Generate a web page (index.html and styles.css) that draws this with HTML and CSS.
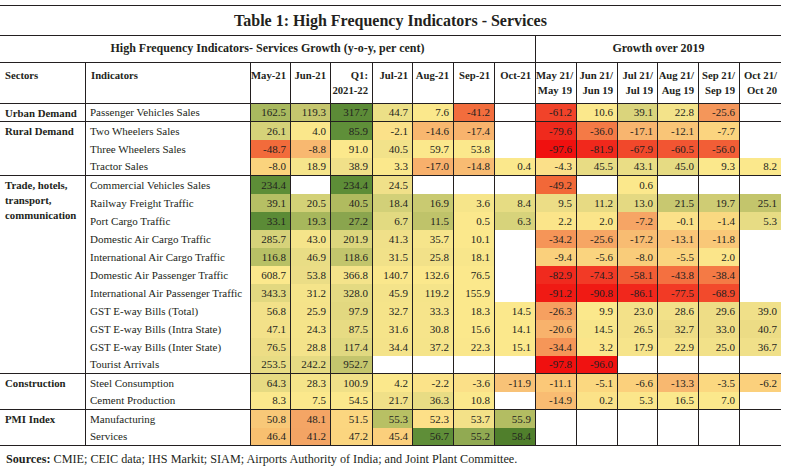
FILE: index.html
```html
<!DOCTYPE html>
<html lang="en">
<head>
<meta charset="utf-8">
<title>Table 1: High Frequency Indicators - Services</title>
<link rel="stylesheet" href="styles.css">
</head>
<body>
<div class="page">
<table class="hf">
<colgroup>
<col class="w86"><col class="w165"><col class="w40"><col class="w40"><col class="w42"><col class="w40"><col class="w41"><col class="w41"><col class="w41"><col class="w41"><col class="w41"><col class="w40"><col class="w41"><col class="w41"><col class="w41">
</colgroup>
<thead>
<tr class="r-title"><th colspan="15">Table 1: High Frequency Indicators - Services</th></tr>
<tr class="r-sub"><th colspan="9" class="sub-left">High Frequency Indicators- Services Growth (y-o-y, per cent)</th><th colspan="6">Growth over 2019</th></tr>
<tr class="r-head">
<th class="al">Sectors</th><th class="al">Indicators</th>
<th>May-21</th><th>Jun-21</th><th>Q1:<br>2021-22</th><th>Jul-21</th><th>Aug-21</th><th>Sep-21</th><th>Oct-21</th>
<th>May 21/<br>May 19</th><th>Jun 21/<br>Jun 19</th><th>Jul 21/<br>Jul 19</th><th>Aug 21/<br>Aug 19</th><th>Sep 21/<br>Sep 19</th><th>Oct 21/<br>Oct 20</th>
</tr>
</thead>
<tbody>
<tr><td class="sec" rowspan="1">Urban Demand</td><td class="ind">Passenger Vehicles Sales</td>
<td style="background:#a9b95f">162.5</td><td style="background:#c5c66e">119.3</td><td style="background:#5c8b37">317.7</td><td style="background:#ece087">44.7</td><td style="background:#fbe88c">7.6</td><td style="background:#f26d3d">-41.2</td><td></td>
<td style="background:#f1432a">-61.2</td><td style="background:#fbe88c">10.6</td><td style="background:#dad47c">39.1</td><td style="background:#f3e38a">22.8</td><td style="background:#f4965a">-25.6</td><td></td></tr>
</tbody>
<tbody>
<tr><td class="sec" rowspan="3">Rural Demand</td><td class="ind">Two Wheelers Sales</td>
<td style="background:#d5d279">26.1</td><td style="background:#fae78b">4.0</td><td style="background:#5f8f39">85.9</td><td style="background:#fbe189">-2.1</td><td style="background:#f8b76f">-14.6</td><td style="background:#f8b36d">-17.4</td><td></td>
<td style="background:#ef2a1d">-79.6</td><td style="background:#f47a46">-36.0</td><td style="background:#f8b56f">-17.1</td><td style="background:#f9c577">-12.1</td><td style="background:#fbd47f">-7.7</td><td></td></tr>
<tr><td class="ind">Three Wheelers Sales</td>
<td style="background:#f26b3b">-48.7</td><td style="background:#f8b870">-8.8</td><td style="background:#fbe88c">91.0</td><td style="background:#f2e28a">40.5</td><td style="background:#fbe88c">59.7</td><td style="background:#fbe88c">53.8</td><td></td>
<td style="background:#f0100f">-97.6</td><td style="background:#f1281c">-81.9</td><td style="background:#f1482b">-67.9</td><td style="background:#f25532">-60.5</td><td style="background:#f25e36">-56.0</td><td></td></tr>
<tr><td class="ind">Tractor Sales</td>
<td style="background:#fad37d">-8.0</td><td style="background:#f6e58b">18.9</td><td style="background:#f0e089">38.9</td><td style="background:#fbe88c">3.3</td><td style="background:#f7b06c">-17.0</td><td style="background:#f8bb72">-14.8</td><td style="background:#fbe88c">0.4</td>
<td style="background:#fbe089">-4.3</td><td style="background:#e8dc84">45.5</td><td style="background:#eadd85">43.1</td><td style="background:#e6db83">45.0</td><td style="background:#fbe88c">9.3</td><td style="background:#fbe88c">8.2</td></tr>
</tbody>
<tbody>
<tr><td class="sec" rowspan="11">Trade, hotels, transport, communication</td><td class="ind">Commercial Vehicles Sales</td>
<td style="background:#5d8d37">234.4</td><td></td><td style="background:#5d8d37">234.4</td><td style="background:#f0e089">24.5</td><td></td><td></td><td></td>
<td style="background:#f26838">-49.2</td><td></td><td style="background:#fbe88c">0.6</td><td></td><td></td><td></td></tr>
<tr><td class="ind">Railway Freight Traffic</td>
<td style="background:#b6bf64">39.1</td><td style="background:#d3d177">20.5</td><td style="background:#b0bb5f">40.5</td><td style="background:#d2d078">18.4</td><td style="background:#c9ca71">16.9</td><td style="background:#f6e58a">3.6</td><td style="background:#e6dc83">8.4</td>
<td style="background:#ecdd86">9.5</td><td style="background:#e7da83">11.2</td><td style="background:#e4d982">13.0</td><td style="background:#c8c870">21.5</td><td style="background:#cfcc74">19.7</td><td style="background:#c3c56c">25.1</td></tr>
<tr><td class="ind">Port Cargo Traffic</td>
<td style="background:#5b8b36">33.1</td><td style="background:#a7b75c">19.3</td><td style="background:#8aa54e">27.2</td><td style="background:#e2da81">6.7</td><td style="background:#bfc36a">11.5</td><td style="background:#fbe88c">0.5</td><td style="background:#d7d37b">6.3</td>
<td style="background:#fbe58a">2.2</td><td style="background:#fbe58a">2.0</td><td style="background:#f6a565">-7.2</td><td style="background:#fbe189">-0.1</td><td style="background:#fad981">-1.4</td><td style="background:#e7dc84">5.3</td></tr>
<tr><td class="ind">Domestic Air Cargo Traffic</td>
<td style="background:#d6d27a">285.7</td><td style="background:#f5e48a">43.0</td><td style="background:#dcd67d">201.9</td><td style="background:#f0e089">41.3</td><td style="background:#f6e58b">35.7</td><td style="background:#fbe88c">10.1</td><td></td>
<td style="background:#f59558">-34.2</td><td style="background:#f6a664">-25.6</td><td style="background:#f8bc72">-17.2</td><td style="background:#f9c477">-13.1</td><td style="background:#f9c878">-11.8</td><td></td></tr>
<tr><td class="ind">International Air Cargo Traffic</td>
<td style="background:#b8c065">116.8</td><td style="background:#e9dd85">46.9</td><td style="background:#c2c56c">118.6</td><td style="background:#f1e189">31.5</td><td style="background:#f2e189">25.8</td><td style="background:#f8e68b">18.1</td><td></td>
<td style="background:#fad07c">-9.4</td><td style="background:#fad47f">-5.6</td><td style="background:#f9cc7a">-8.0</td><td style="background:#fad47e">-5.5</td><td style="background:#fbe58a">2.0</td><td></td></tr>
<tr><td class="ind">Domestic Air Passenger Traffic</td>
<td style="background:#fbe88c">608.7</td><td style="background:#ebdd86">53.8</td><td style="background:#f4e38a">366.8</td><td style="background:#fae78c">140.7</td><td style="background:#fbe88c">132.6</td><td style="background:#fbe88c">76.5</td><td></td>
<td style="background:#f02a1e">-82.9</td><td style="background:#f23a26">-74.3</td><td style="background:#f25c35">-58.1</td><td style="background:#f47040">-43.8</td><td style="background:#f47a45">-38.4</td><td></td></tr>
<tr><td class="ind">International Air Passenger Traffic</td>
<td style="background:#e2d880">343.3</td><td style="background:#f5e48a">31.2</td><td style="background:#e4da82">328.0</td><td style="background:#f4e38a">45.9</td><td style="background:#f5e48a">119.2</td><td style="background:#fbe88c">155.9</td><td></td>
<td style="background:#f01a14">-91.2</td><td style="background:#f01a14">-90.8</td><td style="background:#f1271c">-86.1</td><td style="background:#f23a25">-77.5</td><td style="background:#f24a2c">-68.9</td><td></td></tr>
<tr><td class="ind">GST E-way Bills (Total)</td>
<td style="background:#f2e189">56.8</td><td style="background:#f5e38a">25.9</td><td style="background:#e2d880">97.9</td><td style="background:#f5e48a">32.7</td><td style="background:#f6e48b">33.3</td><td style="background:#fbe88c">18.3</td><td style="background:#fbe88c">14.5</td>
<td style="background:#f6a060">-26.3</td><td style="background:#fbe88c">9.9</td><td style="background:#f3e189">23.0</td><td style="background:#f2e189">28.6</td><td style="background:#eedd86">29.6</td><td style="background:#f0e089">39.0</td></tr>
<tr><td class="ind">GST E-way Bills (Intra State)</td>
<td style="background:#f3e189">47.1</td><td style="background:#f5e48a">24.3</td><td style="background:#e7db83">87.5</td><td style="background:#f5e48a">31.6</td><td style="background:#f6e48b">30.8</td><td style="background:#fbe88c">15.6</td><td style="background:#fbe88c">14.1</td>
<td style="background:#f8b26c">-20.6</td><td style="background:#f8e68b">14.5</td><td style="background:#f3e189">26.5</td><td style="background:#eedd86">32.7</td><td style="background:#eedd86">33.0</td><td style="background:#ecdc85">40.7</td></tr>
<tr><td class="ind">GST E-way Bills (Inter State)</td>
<td style="background:#eddd85">76.5</td><td style="background:#f4e38a">28.8</td><td style="background:#e0d880">117.4</td><td style="background:#f4e38a">34.4</td><td style="background:#f5e48a">37.2</td><td style="background:#fae78c">22.3</td><td style="background:#fbe88c">15.1</td>
<td style="background:#f59658">-34.4</td><td style="background:#fbe58a">3.2</td><td style="background:#f6e48b">17.9</td><td style="background:#f5e38a">22.9</td><td style="background:#f2e189">25.0</td><td style="background:#f0e089">36.7</td></tr>
<tr><td class="ind">Tourist Arrivals</td>
<td style="background:#e8dc84">253.5</td><td style="background:#e6db83">242.2</td><td style="background:#c4c56d">952.7</td><td></td><td></td><td></td><td></td>
<td style="background:#f0100f">-97.8</td><td style="background:#f01211">-96.0</td><td></td><td></td><td></td><td></td></tr>
</tbody>
<tbody>
<tr><td class="sec" rowspan="2">Construction</td><td class="ind">Steel Consumption</td>
<td style="background:#e6da82">64.3</td><td style="background:#f5e48a">28.3</td><td style="background:#f0e088">100.9</td><td style="background:#fbe88c">4.2</td><td style="background:#fbe389">-2.2</td><td style="background:#fbe088">-3.6</td><td style="background:#f8c277">-11.9</td>
<td style="background:#fbc878">-11.1</td><td style="background:#fbd880">-5.1</td><td style="background:#fbd07c">-6.6</td><td style="background:#f8b870">-13.3</td><td style="background:#fbd880">-3.5</td><td style="background:#fbd07c">-6.2</td></tr>
<tr><td class="ind">Cement Production</td>
<td style="background:#fbe88c">8.3</td><td style="background:#fbe88c">7.5</td><td style="background:#fbe88c">54.5</td><td style="background:#f0e088">21.7</td><td style="background:#e8dc84">36.3</td><td style="background:#fbe88c">10.8</td><td></td>
<td style="background:#f9bc72">-14.9</td><td style="background:#fbe288">0.2</td><td style="background:#fbe68b">5.3</td><td style="background:#fbe88c">16.5</td><td style="background:#fbe88c">7.0</td><td></td></tr>
</tbody>
<tbody>
<tr><td class="sec" rowspan="2">PMI Index</td><td class="ind">Manufacturing</td>
<td style="background:#f8c878">50.8</td><td style="background:#f4a565">48.1</td><td style="background:#fbd680">51.5</td><td style="background:#b8c064">55.3</td><td style="background:#fde088">52.3</td><td style="background:#f3e188">53.7</td><td style="background:#b3bd62">55.9</td>
<td></td><td></td><td></td><td></td><td></td><td></td></tr>
<tr><td class="ind">Services</td>
<td style="background:#f8c070">46.4</td><td style="background:#f3a464">41.2</td><td style="background:#fbd57f">47.2</td><td style="background:#fbcf7c">45.4</td><td style="background:#5f8e38">56.7</td><td style="background:#91aa52">55.2</td><td style="background:#507f2c">58.4</td>
<td></td><td></td><td></td><td></td><td></td><td></td></tr>
</tbody>
</table>
<p class="sources"><b>Sources:</b> CMIE; CEIC data; IHS Markit; SIAM; Airports Authority of India; and Joint Plant Committee.</p>
</div>
</body>
</html>
```
FILE: styles.css
```css
html, body {
  margin: 0;
  background: #ffffff;
}
body {
  font-family: "Liberation Serif", "Times New Roman", serif;
  color: #231f20;
}
.page {
  width: 781px;
  padding-top: 5px;
}
.hf {
  border-collapse: separate;
  border-spacing: 0;
  table-layout: fixed;
  width: 781px;
}
.w86 { width: 86px; }
.w165 { width: 165px; }
.w40 { width: 40px; }
.w41 { width: 41px; }
.w42 { width: 42px; }

.hf th, .hf td {
  padding: 0;
  border: 0 solid #231f20;
}

/* title row: 5..36, lines at 5 and 35 */
.r-title { height: 31px; }
.r-title th {
  font-size: 16px;
  font-weight: bold;
  text-align: center;
  vertical-align: middle;
  border-top-width: 1px;
  border-bottom-width: 1px;
}

/* sub header row: 36..63, line at 62 */
.r-sub { height: 27px; }
.r-sub th {
  font-size: 12px;
  font-weight: bold;
  text-align: center;
  vertical-align: middle;
  border-bottom-width: 1px;
  padding-bottom: 1px;
}
.r-sub .sub-left {
  border-right-width: 1px;
}

/* column header row: 63..104, line at 103 */
.r-head { height: 41px; }
.r-head th {
  font-size: 10.7px;
  font-weight: bold;
  line-height: 15px;
  text-align: right;
  vertical-align: top;
  padding: 5px 4px 0 0;
  border-bottom-width: 1px;
  white-space: nowrap;
}
.r-head th:not(:last-child),
.hf tbody td:not(:last-child) {
  border-right-width: 1px;
}
.r-head th.al {
  text-align: left;
  padding-left: 5px;
}

/* body rows, 18px each, group separator inside the last row */
.hf tbody tr { height: 18px; }
.hf tbody td {
  font-size: 11px;
  line-height: 17px;
  text-align: right;
  vertical-align: middle;
  white-space: nowrap;
  padding: 0 4px 0 0;
}
.hf tbody tr:last-child td,
.hf tbody td.sec {
  border-bottom-width: 1px;
}
.hf tbody td.ind {
  text-align: left;
  padding-left: 4px;
}
.hf tbody td.sec {
  font-size: 10.8px;
  font-weight: bold;
  line-height: 15px;
  text-align: left;
  vertical-align: top;
  white-space: normal;
  padding: 2px 2px 0 5px;
}
.sources {
  margin: 6px 0 0 6px;
  font-size: 12.2px;
  line-height: 14px;
}
```
